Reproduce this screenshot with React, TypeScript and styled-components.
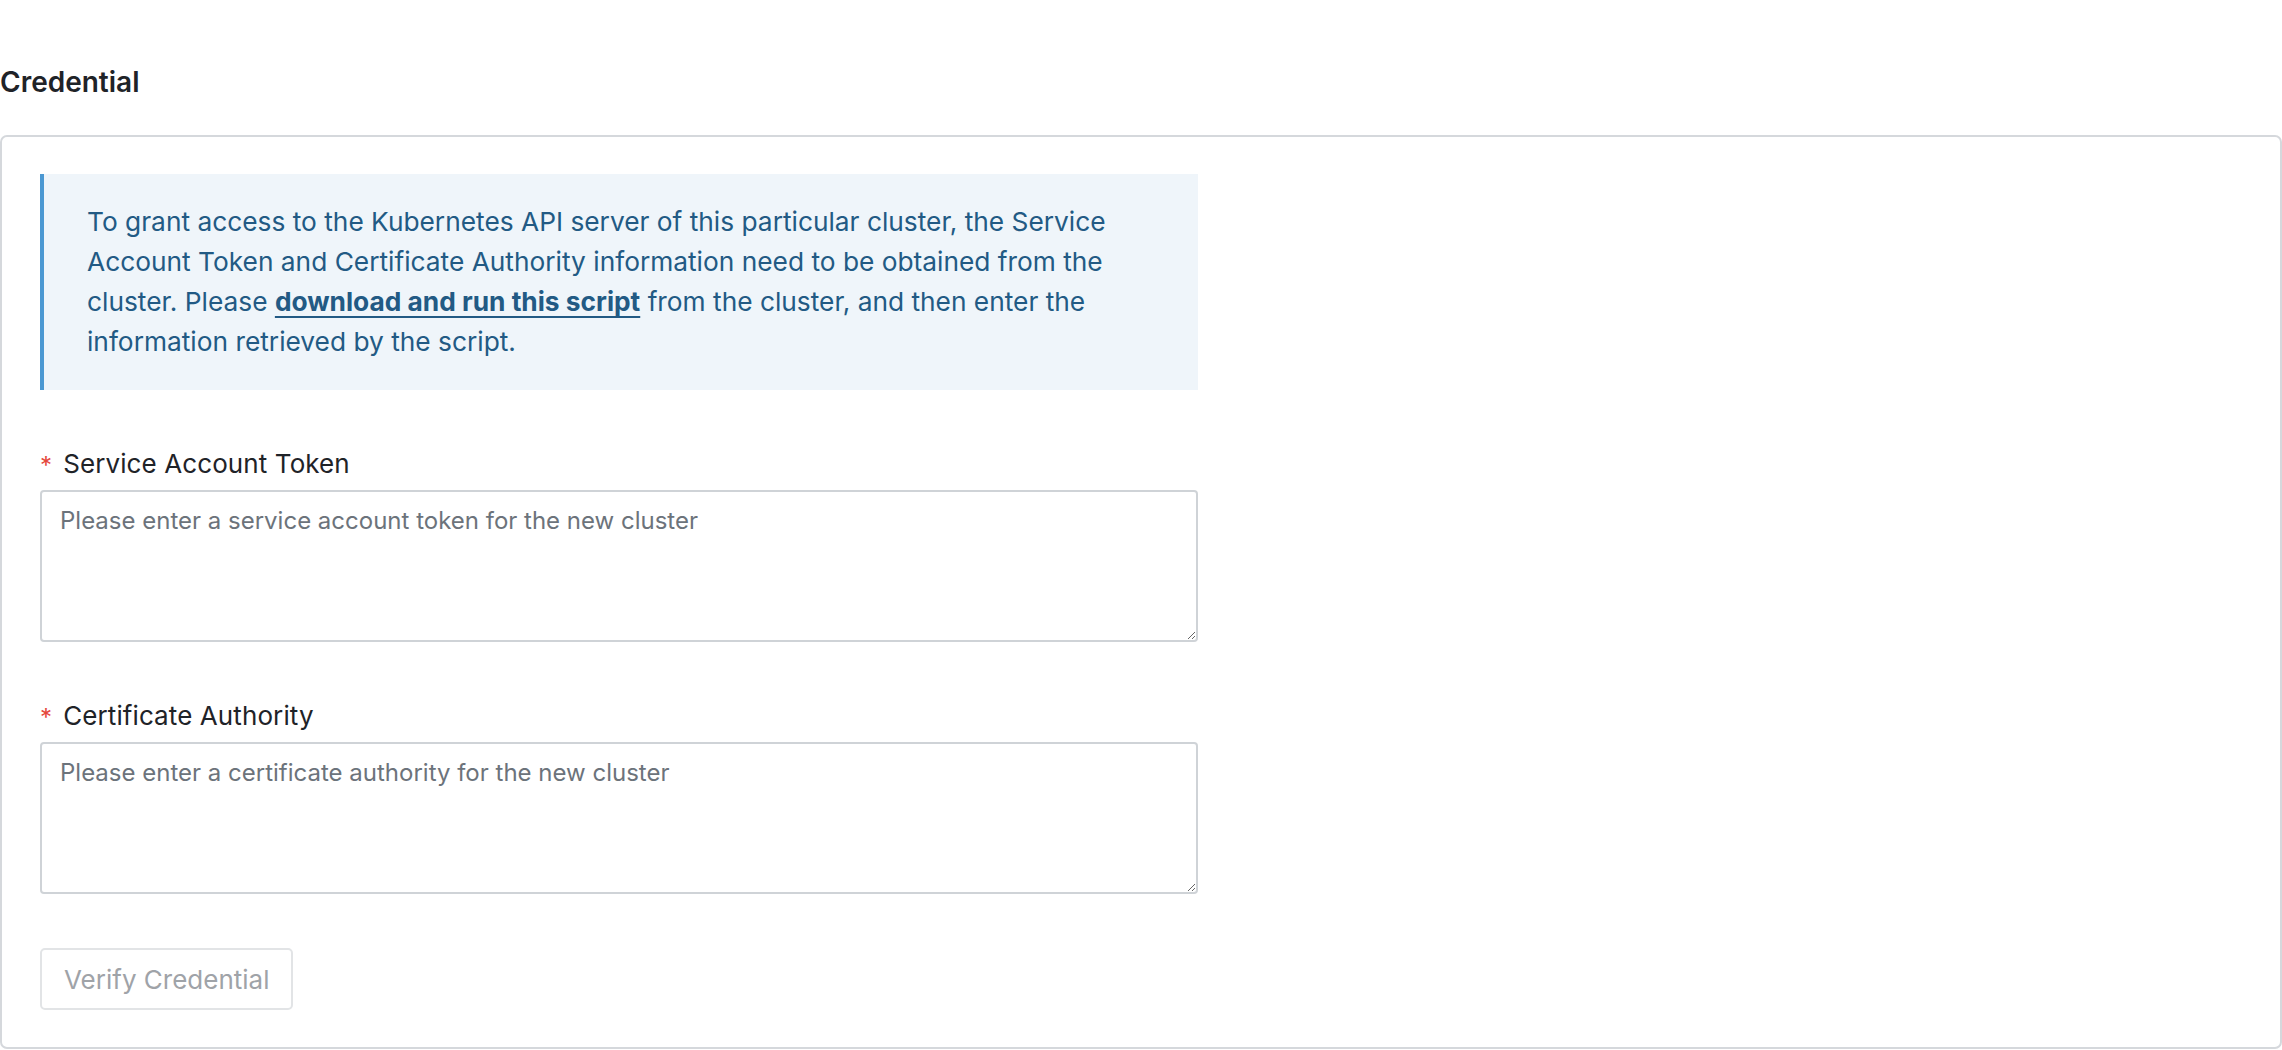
import React from "react";
import styled, { createGlobalStyle } from "styled-components";

const GlobalStyle = createGlobalStyle`
  html, body {
    margin: 0;
    padding: 0;
    background: #ffffff;
  }
  body {
    font-family: Inter, "Noto Sans", "Liberation Sans", sans-serif;
    color: #1f2328;
  }
  * { box-sizing: border-box; }
`;

const Page = styled.main`
  padding-top: 62px;
  width: 2282px;
`;

const Heading = styled.h2`
  margin: 0 0 33px 0;
  font-size: 28px;
  line-height: 40px;
  font-weight: 600;
  color: #1f2328;
`;

const Card = styled.section`
  border: 2px solid #d5d8dc;
  border-radius: 7px;
  padding: 37px 38px;
`;

const Form = styled.form`
  max-width: 1158px;
  display: flex;
  flex-direction: column;
`;

const Notice = styled.div`
  background: #eff5fa;
  border-left: 4px solid #4b98d2;
  padding: 28px 44px 28px 43px;
  margin-bottom: 54px;
  font-size: 26.3px;
  line-height: 40px;
  color: #225a84;
`;

const NoticeLink = styled.a`
  color: #225a84;
  font-weight: 700;
  text-decoration: underline;
  text-decoration-thickness: 2px;
  text-underline-offset: 5px;
`;

const Field = styled.div`
  display: flex;
  flex-direction: column;
  gap: 6px;
  margin-bottom: 54px;
`;

const Label = styled.label`
  display: flex;
  align-items: center;
  font-size: 26px;
  line-height: 36px;
  font-weight: 400;
  letter-spacing: 0.1px;
  color: #1f2328;
`;

const Required = styled.span`
  color: #e5483c;
  font-size: 24px;
  margin-right: 11px;
  padding-top: 4px;
`;

const TextArea = styled.textarea`
  width: 100%;
  height: 152px;
  flex-shrink: 0;
  border: 2px solid #cfd3d7;
  border-radius: 4px;
  padding: 11px 18px;
  font-family: Inter, "Noto Sans", "Liberation Sans", sans-serif;
  font-size: 24px;
  line-height: 36px;
  color: #1f2328;
  background: #ffffff;
  resize: vertical;
  outline: none;
  &::placeholder {
    color: #6c737b;
  }
`;

const Actions = styled.div`
  display: flex;
`;

const Button = styled.button`
  height: 62px;
  padding: 0 22px;
  border: 2px solid #e2e4e6;
  border-radius: 5px;
  background: #ffffff;
  color: #9fa3a8;
  font-family: Inter, "Noto Sans", "Liberation Sans", sans-serif;
  font-size: 26px;
  cursor: not-allowed;
`;

export default function App() {
  return (
    <>
      <GlobalStyle />
      <Page>
        <Heading>Credential</Heading>
        <Card>
          <Form onSubmit={(e) => e.preventDefault()}>
            <Notice>
              To grant access to the Kubernetes API server of this particular
              cluster, the Service Account Token and Certificate Authority
              information need to be obtained from the cluster. Please{" "}
              <NoticeLink href="#">download and run this script</NoticeLink>{" "}
              from the cluster, and then enter the information retrieved by the
              script.
            </Notice>
            <Field>
              <Label htmlFor="token">
                <Required>*</Required>Service Account Token
              </Label>
              <TextArea
                id="token"
                placeholder="Please enter a service account token for the new cluster"
              />
            </Field>
            <Field>
              <Label htmlFor="ca">
                <Required>*</Required>Certificate Authority
              </Label>
              <TextArea
                id="ca"
                placeholder="Please enter a certificate authority for the new cluster"
              />
            </Field>
            <Actions>
              <Button type="button" disabled>
                Verify Credential
              </Button>
            </Actions>
          </Form>
        </Card>
      </Page>
    </>
  );
}
